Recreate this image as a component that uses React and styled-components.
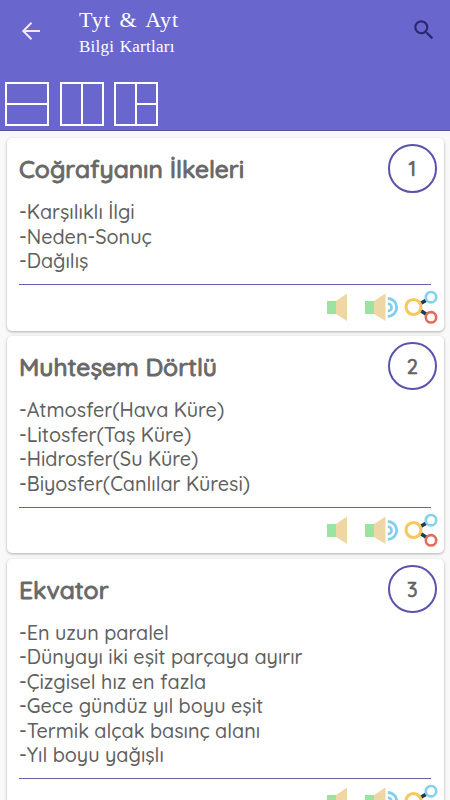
import styled, { createGlobalStyle } from "styled-components";

const GlobalStyle = createGlobalStyle`
  * {
    box-sizing: border-box;
  }

  body {
    margin: 0;
    background-color: #f9f9fa;
    font-family: Quicksand, Lato, "Noto Sans", sans-serif;
  }
`;

const Screen = styled.div`
  display: flex;
  flex-flow: column nowrap;
  height: 800px;
  overflow: hidden;
`;

const Header = styled.header`
  flex: none;
  height: 131px;
  border-bottom: 1px solid #5450a0;
  background-color: #6967ce;
`;

const Toolbar = styled.div`
  display: flex;
  flex-flow: row nowrap;
  align-items: flex-start;
  height: 82px;
  padding: 0 13.5px 0 18.5px;
`;

const IconButton = styled.button`
  display: flex;
  margin: ${(props) => props.$top}px 0 0;
  padding: 0;
  border: 0;
  background: none;
`;

const ToolbarTitles = styled.div`
  flex: 1;
  padding: 7px 0 0 36.5px;
  color: #fff;
  font-family: "Liberation Serif", serif;
  white-space: nowrap;
`;

const ToolbarTitle = styled.div`
  font-size: 22px;
  line-height: 26px;
  letter-spacing: 0.9px;
  word-spacing: 2.5px;
`;

const ToolbarSubtitle = styled.div`
  font-size: 17px;
  line-height: 27px;
  letter-spacing: 0.25px;
  word-spacing: 1px;
`;

const LayoutButtons = styled.div`
  display: flex;
  flex-flow: row nowrap;
  gap: 10.5px;
  padding-left: 5px;
`;

const CardList = styled.main`
  display: flex;
  flex-flow: column nowrap;
  gap: 5.4px;
  padding: 7px 6.5px 0;
`;

const Card = styled.section`
  flex: none;
  border-radius: 5px;
  background-color: #fff;
  box-shadow: 0 1px 3px rgba(0, 0, 0, 0.3);
`;

const CardHeader = styled.div`
  display: flex;
  flex-flow: row nowrap;
  justify-content: space-between;
  height: 62px;
  padding: 6px 7px 0 12.5px;
`;

const CardTitle = styled.h2`
  margin: 0;
  color: #686868;
  font-weight: 500;
  font-size: 24.6px;
  line-height: 50px;
  white-space: nowrap;
  -webkit-text-stroke: 0.9px #686868;
`;

const CardNumber = styled.div`
  flex: none;
  width: 48.5px;
  height: 48.5px;
  border: 2px solid #5953ad;
  border-radius: 50%;
  color: #626262;
  font-weight: 500;
  font-size: 20px;
  line-height: 46px;
  text-align: center;
  -webkit-text-stroke: 0.6px #626262;
`;

const CardBody = styled.div`
  margin: 0 12.5px;
  padding-bottom: 10.2px;
  border-bottom: 1px solid #6761b0;
`;

const CardLine = styled.div`
  height: 24.6px;
  color: #606060;
  font-weight: 500;
  font-size: 19.75px;
  line-height: 24.6px;
  white-space: nowrap;
`;

const CardActions = styled.div`
  display: flex;
  flex-flow: row nowrap;
  justify-content: flex-end;
  height: 45.6px;
  padding: 7px 6px 0 0;

  svg {
    overflow: visible;
  }
`;

const BackIcon = () => (
  <svg width="24" height="24" viewBox="0 0 24 24" fill="none">
    <path
      d="M21 12H4.5M12.5 3.8L4.3 12L12.5 20.2"
      stroke="#f6e6fb"
      strokeWidth="2"
    />
  </svg>
);

const SearchIcon = () => (
  <svg width="26" height="26" viewBox="0 0 24 24">
    <path
      fill="#2b286d"
      d="M15.5 14h-.79l-.28-.27A6.47 6.47 0 0 0 16 9.5 6.5 6.5 0 1 0 9.5 16c1.61 0 3.09-.59 4.23-1.57l.27.28v.79l5 4.99L20.49 19l-4.99-5zm-6 0C7.01 14 5 11.99 5 9.5S7.01 5 9.5 5 14 7.01 14 9.5 11.99 14 9.5 14z"
    />
  </svg>
);

const LayoutIcon = ({ lines }) => (
  <svg width="44" height="44" viewBox="0 0 44 44" fill="none">
    <path d={"M1 1H43V43H1Z" + lines} stroke="#fff" strokeWidth="2" />
  </svg>
);

const SpeakerIcon = () => (
  <svg width="38" height="30" viewBox="0 0 38 30">
    <path d="M0 9H9V22H0Z" fill="#9be3a1" />
    <path d="M9 9L20 1.5V29L9 22Z" fill="#eed7a4" />
  </svg>
);

const LoudSpeakerIcon = () => (
  <svg width="38.5" height="30" viewBox="0 0 38.5 30" fill="none">
    <path d="M0 9H9V22H0Z" fill="#9be3a1" />
    <path d="M9 9L20.5 1.5V29L9 22Z" fill="#eed7a4" />
    <path
      d="M22.8 11.7A3.7 3.7 0 0 1 22.8 19.1M22.8 6.5A8.9 8.9 0 0 1 22.8 24.3"
      stroke="#80cff0"
      strokeWidth="2.8"
    />
  </svg>
);

const ShareIcon = () => (
  <svg width="34" height="34" viewBox="0 0 34 34" fill="none">
    <path
      d="M16.5 11.5L22.3 8.1M16.5 18.5L22.3 22.2"
      stroke="#203c50"
      strokeWidth="3.6"
    />
    <circle cx="9.5" cy="15" r="7.5" stroke="#f5c95b" strokeWidth="3.1" />
    <circle cx="27" cy="5.2" r="5.2" stroke="#83d1ef" strokeWidth="2.6" />
    <circle cx="27" cy="25.3" r="5.2" stroke="#e26b5c" strokeWidth="2.6" />
  </svg>
);

const cards = [
  {
    title: "Coğrafyanın İlkeleri",
    lines: ["-Karşılıklı İlgi", "-Neden-Sonuç", "-Dağılış"],
  },
  {
    title: "Muhteşem Dörtlü",
    lines: [
      "-Atmosfer(Hava Küre)",
      "-Litosfer(Taş Küre)",
      "-Hidrosfer(Su Küre)",
      "-Biyosfer(Canlılar Küresi)",
    ],
  },
  {
    title: "Ekvator",
    lines: [
      "-En uzun paralel",
      "-Dünyayı iki eşit parçaya ayırır",
      "-Çizgisel hız en fazla",
      "-Gece gündüz yıl boyu eşit",
      "-Termik alçak basınç alanı",
      "-Yıl boyu yağışlı",
    ],
  },
];

const App = () => {
  return (
    <Screen>
      <GlobalStyle />
      <Header>
        <Toolbar>
          <IconButton $top={18.5} aria-label="Geri">
            <BackIcon />
          </IconButton>
          <ToolbarTitles>
            <ToolbarTitle>Tyt &amp; Ayt</ToolbarTitle>
            <ToolbarSubtitle>Bilgi Kartları</ToolbarSubtitle>
          </ToolbarTitles>
          <IconButton $top={17} aria-label="Ara">
            <SearchIcon />
          </IconButton>
        </Toolbar>
        <LayoutButtons>
          <LayoutIcon lines="M1 22H43" />
          <LayoutIcon lines="M22 1V43" />
          <LayoutIcon lines="M22 1V43M22 22H43" />
        </LayoutButtons>
      </Header>
      <CardList>
        {cards.map((card, index) => (
          <Card key={card.title}>
            <CardHeader>
              <CardTitle>{card.title}</CardTitle>
              <CardNumber>{index + 1}</CardNumber>
            </CardHeader>
            <CardBody>
              {card.lines.map((line) => (
                <CardLine key={line}>{line}</CardLine>
              ))}
            </CardBody>
            <CardActions>
              <SpeakerIcon />
              <LoudSpeakerIcon />
              <ShareIcon />
            </CardActions>
          </Card>
        ))}
      </CardList>
    </Screen>
  );
};

export default App;
